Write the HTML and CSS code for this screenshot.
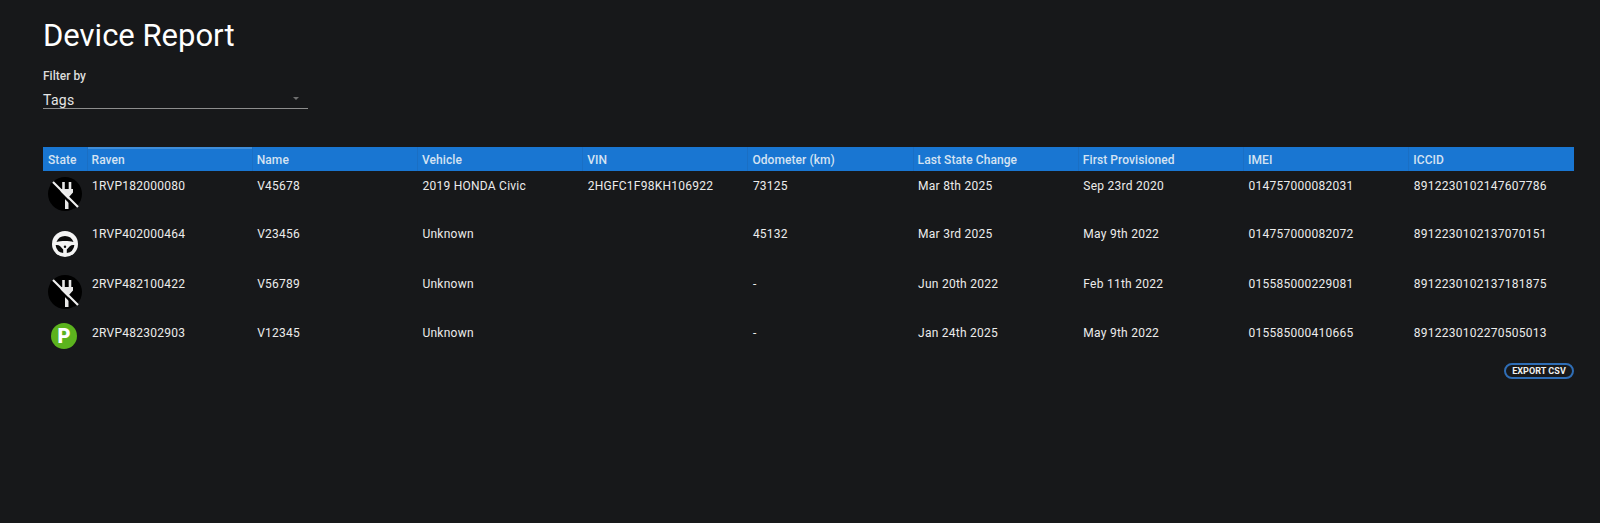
FILE: index.html
```html
<!DOCTYPE html>
<html lang="en">
<head>
<meta charset="utf-8">
<title>Device Report</title>
<link rel="stylesheet" href="styles.css">
</head>
<body>
<main class="page">
  <h1 class="title">Device Report</h1>
  <div class="filter">
    <div class="filter-label">Filter by</div>
    <div class="select"><span>Tags</span><i class="caret"></i></div>
  </div>
  <table class="report">
    <thead>
      <tr>
        <th class="col-state">State</th>
        <th class="sorted">Raven</th>
        <th>Name</th>
        <th>Vehicle</th>
        <th>VIN</th>
        <th>Odometer (km)</th>
        <th>Last State Change</th>
        <th>First Provisioned</th>
        <th>IMEI</th>
        <th>ICCID</th>
      </tr>
    </thead>
    <tbody>
      <tr class="row-a">
        <td class="state"><svg class="ico-large" viewBox="0 0 34 34"><circle cx="17" cy="17" r="17" fill="#000"/><path d="M15.500 5v8M22 5v8" stroke="#e8e8e8" stroke-width="2.600" fill="none"/><path d="M12.500 12h12.500v3.500l-4.500 5V32h-3.500V20.500l-4.500-5z" fill="#e8e8e8"/><path d="M3 6.500 27.500 31" stroke="#000" stroke-width="2.400"/><path d="M5 5 30 30" stroke="#f0f0f0" stroke-width="2.200"/></svg></td>
        <td>1RVP182000080</td><td>V45678</td><td>2019 HONDA Civic</td><td>2HGFC1F98KH106922</td><td>73125</td><td>Mar 8th 2025</td><td>Sep 23rd 2020</td><td>014757000082031</td><td>8912230102147607786</td>
      </tr>
      <tr class="row-b">
        <td class="state"><svg class="ico-small" viewBox="0 0 26 26"><circle cx="13" cy="13" r="13" fill="#f4f4f4"/><path d="M4.500 11a9 9 0 0 1 17 0c-2.500-.7-5.300-1-8.500-1s-6 .3-8.500 1z" fill="#0b0b0b"/><path d="M3.600 14.200c1.800-.3 3.400 0 4.600 1l3 3.300v3.600a9.400 9.400 0 0 1-7.600-7.900zM22.400 14.200c-1.800-.3-3.400 0-4.600 1l-3 3.300v3.600a9.400 9.400 0 0 0 7.600-7.900z" fill="#0b0b0b"/><circle cx="13" cy="15.800" r="1.200" fill="#0b0b0b"/></svg></td>
        <td>1RVP402000464</td><td>V23456</td><td>Unknown</td><td></td><td>45132</td><td>Mar 3rd 2025</td><td>May 9th 2022</td><td>014757000082072</td><td>8912230102137070151</td>
      </tr>
      <tr class="row-c">
        <td class="state"><svg class="ico-large" viewBox="0 0 34 34"><circle cx="17" cy="17" r="17" fill="#000"/><path d="M15.500 5v8M22 5v8" stroke="#e8e8e8" stroke-width="2.600" fill="none"/><path d="M12.500 12h12.500v3.500l-4.500 5V32h-3.500V20.500l-4.500-5z" fill="#e8e8e8"/><path d="M3 6.500 27.500 31" stroke="#000" stroke-width="2.400"/><path d="M5 5 30 30" stroke="#f0f0f0" stroke-width="2.200"/></svg></td>
        <td>2RVP482100422</td><td>V56789</td><td>Unknown</td><td></td><td>-</td><td>Jun 20th 2022</td><td>Feb 11th 2022</td><td>015585000229081</td><td>8912230102137181875</td>
      </tr>
      <tr class="row-d">
        <td class="state"><span class="parked">P</span></td>
        <td>2RVP482302903</td><td>V12345</td><td>Unknown</td><td></td><td>-</td><td>Jan 24th 2025</td><td>May 9th 2022</td><td>015585000410665</td><td>8912230102270505013</td>
      </tr>
    </tbody>
  </table>
  <div class="actions"><button class="export" type="button">EXPORT CSV</button></div>
</main>
</body>
</html>
```

FILE: styles.css
```css
* { box-sizing: border-box; }
html, body { margin: 0; height: 100%; }
body {
  background: #17181a;
  color: #ececec;
  font-family: Roboto, "Liberation Sans", sans-serif;
  overflow: hidden;
}
.page { padding: 15px 26px 0 43px; }
.title {
  margin: 0;
  font-size: 31px;
  line-height: 42px;
  font-weight: 400;
  color: #fff;
}
.filter { margin-top: 11px; width: 265px; }
.filter-label { font-size: 12px; line-height: 16px; font-weight: 500; color: #dcdcdc; }
.select {
  display: flex;
  align-items: center;
  justify-content: space-between;
  height: 25px;
  padding: 8px 9px 0 0;
  border-bottom: 1px solid #8d8d8d;
  font-size: 14px;
  letter-spacing: .3px;
  color: #e6e6e6;
}
.caret {
  width: 0;
  height: 0;
  margin-top: -4px;
  border-left: 3.500px solid transparent;
  border-right: 3.500px solid transparent;
  border-top: 3.500px solid #6f6f6f;
}
.report {
  width: 1531px;
  margin-top: 38px;
  table-layout: fixed;
  border-collapse: collapse;
  font-size: 12px;
  letter-spacing: .25px;
}
.report th {
  height: 24px;
  padding: 1px 5px 0 4px;
  background: #1976d2;
  color: #d5e3f2;
  font-weight: 500;
  letter-spacing: .08px;
  text-align: left;
  border-left: 1px solid #1a6fc4;
}
.report th.col-state { width: 44px; padding-left: 5px; border-left: 0; }
.report th.sorted { box-shadow: inset 0 2px 0 #3f8dd9; }
.report td {
  padding: 8px 5px 0;
  vertical-align: top;
  font-weight: 400;
  line-height: 15px;
  white-space: nowrap;
}
.report td.state { padding: 6px 0 0 5px; line-height: 0; }
.row-a { height: 48px; }
.row-b { height: 50px; }
.row-c { height: 49px; }
.row-d { height: 43px; }
.report .row-b td.state { padding: 12px 0 0 9px; }
.report .row-d td.state { padding: 5px 0 0 8px; }
.ico-large { width: 34px; height: 34px; display: block; }
.ico-small { width: 26px; height: 26px; display: block; }
.parked {
  display: flex;
  align-items: center;
  justify-content: center;
  width: 26px;
  height: 26px;
  border-radius: 50%;
  background: #5cb31e;
  color: #fff;
  font-size: 20px;
  line-height: 26px;
  font-weight: 900;
  letter-spacing: 0;
}
.actions { display: flex; justify-content: flex-end; margin-top: 2px; }
.export {
  width: 70px;
  height: 16px;
  padding: 0;
  border: 2px solid #2f6db5;
  border-radius: 8px;
  background: transparent;
  color: #f0f0f0;
  font-family: inherit;
  font-size: 9px;
  font-weight: 700;
  letter-spacing: .05px;
  line-height: 12px;
}
```
